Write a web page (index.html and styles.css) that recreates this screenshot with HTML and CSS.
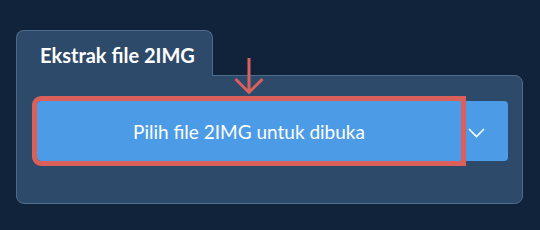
FILE: index.html
```html
<!DOCTYPE html>
<html lang="id">
<head>
    <meta charset="UTF-8">
    <meta name="viewport" content="width=device-width, initial-scale=1.0">
    <title>Ekstrak file 2IMG</title>
    <link rel="stylesheet" href="styles.css">
</head>
<body>
    <div class="extract-box">
        <div class="tab">Ekstrak file 2IMG</div>
        <div class="panel">
            <svg class="hint-arrow" width="32" height="38" viewBox="0 0 32 38">
                <path d="M16 1 V35.5 M2.5 22 L16 35.5 L29.5 22" fill="none" stroke="#d9605b" stroke-width="3"/>
            </svg>
            <div class="btn-group">
                <button type="button" class="btn-main">Pilih file 2IMG untuk dibuka</button>
                <button type="button" class="btn-toggle">
                    <svg class="chevron" width="17" height="10" viewBox="0 0 17 10">
                        <path d="M1 1 L8.5 8.5 L16 1" fill="none" stroke="#fff" stroke-width="1.6"/>
                    </svg>
                </button>
            </div>
        </div>
    </div>
</body>
</html>
```

FILE: styles.css
```css
body {
    margin: 0;
    background-color: #11233a;
    font-family: Lato, "Open Sans", sans-serif;
}
.extract-box {
    padding: 30px 0 0 16px;
    width: 507px;
}
.tab {
    position: relative;
    z-index: 1;
    width: 197px;
    height: 46px;
    margin-bottom: -1px;
    padding-left: 23px;
    box-sizing: border-box;
    background-color: #2d4a6a;
    border: 1px solid #4f6b8b;
    border-bottom: none;
    border-radius: 8px 8px 0 0;
    color: #fff;
    font-size: 20px;
    font-weight: bold;
    line-height: 48px;
    white-space: nowrap;
}
.panel {
    position: relative;
    padding: 25px 14px 42px 20px;
    background-color: #2d4a6a;
    border: 1px solid #4f6b8b;
    border-radius: 0 8px 8px 8px;
}
.hint-arrow {
    position: absolute;
    left: 216px;
    top: -19px;
    z-index: 2;
}
.btn-group {
    display: flex;
    height: 60px;
}
.btn-main {
    position: relative;
    z-index: 1;
    width: 424px;
    border: none;
    border-radius: 4px 0 0 4px;
    outline: 5px solid #db605b;
    background-color: #4c9be7;
    color: #fff;
    font-family: Lato, "Open Sans", sans-serif;
    font-size: 19px;
    padding: 0;
}
.btn-toggle {
    display: flex;
    align-items: center;
    width: 47px;
    padding: 0 0 0 7px;
    border: none;
    border-radius: 0 4px 4px 0;
    background-color: #4c9be7;
}
.chevron {
    margin-top: 4px;
}
```
